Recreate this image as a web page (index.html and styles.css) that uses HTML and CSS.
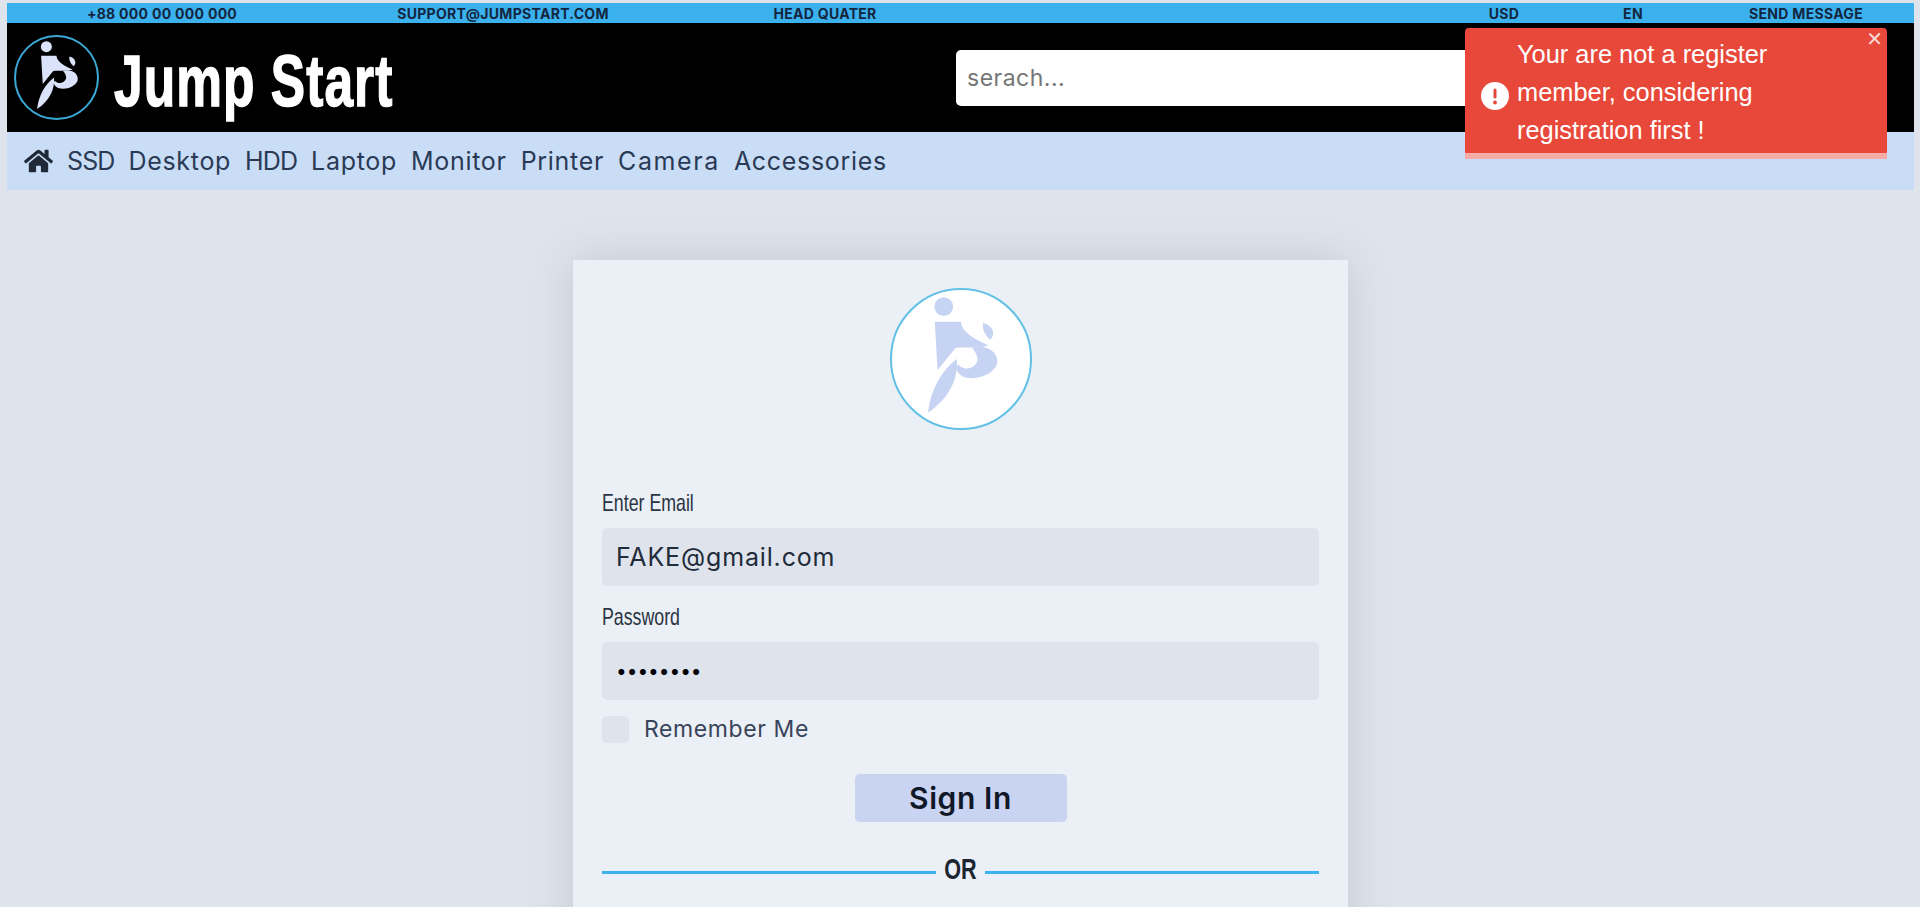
FILE: index.html
```html
<!DOCTYPE html>
<html lang="en">
<head>
<meta charset="utf-8">
<title>Jump Start</title>
<link rel="stylesheet" href="styles.css">
</head>
<body>
<svg class="defs" width="0" height="0" aria-hidden="true">
  <symbol id="js-logo" viewBox="0 0 100 100">
    <circle cx="37.500" cy="12" r="6.800"/>
    <path d="M31 23H50C50 30 60 36 70 40C62 43 52 41 46 42L33 58Z"/>
    <path d="M66 24C74 26 75 33 71 36C68 33 65 29 66 24Z"/>
    <path class="soft" d="M58 42C70 39 78 46 76 54C73 61 62 66 52 63C46 60 46 56 48 54C52 59 60 57 62 51C62 47 60 44 58 42Z"/>
    <path class="soft" d="M47 50C48 64 42 78 26 89C28 72 36 58 47 50Z"/>
  </symbol>
</svg>
<header class="site-header">
  <div class="topbar">
    <span>+88 000 00 000 000</span>
    <span>SUPPORT@JUMPSTART.COM</span>
    <span>HEAD QUATER</span>
    <span class="spacer"></span>
    <span>USD</span>
    <span>EN</span>
    <span>SEND MESSAGE</span>
  </div>
  <div class="brandbar">
    <div class="brand-logo"><svg class="logo-svg"><use href="#js-logo"/></svg></div>
    <div class="brand-name"><span class="narrow brand-text">Jump Start</span></div>
    <input class="search" type="text" placeholder="serach...">
  </div>
  <nav class="navbar">
    <svg class="home" viewBox="0 0 576 512"><path d="M280.400 148.300 96 300.100V464a16 16 0 0 0 16 16l112-.3a16 16 0 0 0 16-16V368a16 16 0 0 1 16-16h64a16 16 0 0 1 16 16v95.600a16 16 0 0 0 16 16l112 .4a16 16 0 0 0 16-16V300L295.700 148.300a12.200 12.200 0 0 0-15.300 0zM571.600 251.500 488 182.600V44.100a12 12 0 0 0-12-12h-56a12 12 0 0 0-12 12v72.600L318.500 43a48 48 0 0 0-61 0L4.300 251.500a12 12 0 0 0-1.600 16.900l25.500 31a12 12 0 0 0 16.900 1.600l235.200-193.700a12.200 12.200 0 0 1 15.300 0L530.900 301a12 12 0 0 0 16.900-1.600l25.500-31a12 12 0 0 0-1.700-16.900z"/></svg>
    <a class="tight">SSD</a><a>Desktop</a><a class="tight">HDD</a><a>Laptop</a><a>Monitor</a><a>Printer</a><a class="wide">Camera</a><a>Accessories</a>
  </nav>
</header>

<main class="page">
  <form class="card">
    <div class="card-logo"><svg class="logo-svg"><use href="#js-logo"/></svg></div>
    <label class="field-label"><span class="narrow">Enter Email</span></label>
    <input class="field" type="text" value="FAKE@gmail.com">
    <label class="field-label label-pass"><span class="narrow">Password</span></label>
    <input class="field field-pass" type="password" value="12345678">
    <div class="remember"><span class="check"></span><span>Remember Me</span></div>
    <button class="signin" type="button">Sign In</button>
    <div class="or"><span class="line"></span><span class="or-text"><span class="narrow or-narrow">OR</span></span><span class="line"></span></div>
  </form>
</main>

<div class="toast">
  <svg class="toast-icon" viewBox="0 0 28 28"><circle cx="14" cy="14" r="14" fill="#fff"/><rect x="12.500" y="6.500" width="3" height="10" rx="1.500" fill="#e8483a"/><circle cx="14" cy="20.500" r="1.900" fill="#e8483a"/></svg>
  <p class="toast-text">Your are not a register member, considering registration first !</p>
  <span class="toast-close">✕</span>
</div>
</body>
</html>
```

FILE: styles.css
```css
* { box-sizing: border-box; }
html { overflow: hidden; height: 100%; }
body {
  margin: 0;
  padding: 3px 6px 0 7px;
  height: 100%;
  overflow: hidden;
  background: #dfe4ec;
  font-family: "Inter", "Noto Sans", sans-serif;
  color: #212b3a;
}
.defs { position: absolute; }

/* condensed look for the display face */
.narrow {
  display: inline-block;
  transform: scaleX(.74);
  transform-origin: left center;
  white-space: nowrap;
}

.topbar {
  display: grid;
  grid-template-columns: 310px 372px 272px 479px 128px 130px 216px;
  justify-items: center;
  align-items: center;
  height: 20px;
  background: #3bb1ee;
  font-size: 14px;
  letter-spacing: .3px;
  font-weight: 700;
  color: #13263f;
  white-space: nowrap;
}

.brandbar {
  display: flex;
  align-items: center;
  height: 109px;
  background: #000;
  padding-left: 7px;
}
.brand-logo {
  width: 85px;
  height: 85px;
  flex: none;
  border: 2px solid #3ba9d6;
  border-radius: 50%;
}
.logo-svg { display: block; width: 100%; height: 100%; fill: currentColor; }
.brand-logo .logo-svg { fill: #dbe3fa; }
.brand-name {
  width: 282px;
  flex: none;
  margin-left: 15px;
  padding-top: 5px;
  font-family: "Liberation Sans", sans-serif;
  font-size: 73px;
  font-weight: 700;
  line-height: 1;
  color: #fff;
}
.brand-text {
  transform: scaleX(.705);
  letter-spacing: 1.500px;
  -webkit-text-stroke: 1.500px #fff;
}
.search {
  margin-left: 560px;
  width: 700px;
  height: 56px;
  border: 0;
  border-radius: 5px;
  background: #fff;
  padding: 0 11px;
  font-family: "Inter", sans-serif;
  font-size: 23px;
  letter-spacing: .5px;
}
.search::placeholder { color: #757575; opacity: 1; }

.navbar {
  display: flex;
  align-items: center;
  gap: 14px;
  height: 58px;
  background: #c9ddf6;
  padding-left: 17px;
  font-size: 25px;
  letter-spacing: .7px;
  color: #2a3a55;
}
.navbar a { white-space: nowrap; }
.navbar .tight { letter-spacing: -.9px; }
.navbar .wide { letter-spacing: 1.6px; }
.home { width: 29px; height: 26px; fill: #1f2937; }

.page { display: flex; justify-content: center; padding-top: 70px; }
.card {
  width: 775px;
  height: 760px;
  background: #eaf0f6;
  padding: 28px 29px 0;
  box-shadow: 0 0 40px rgba(90, 105, 125, .22);
}
.card-logo {
  width: 142px;
  height: 142px;
  margin: 0 auto 60px;
  background: #fff;
  border: 2px solid #62c0e6;
  border-radius: 50%;
  color: #c6d3f3;
}
.card-logo .soft { fill: #d9e5f1; }
.field-label {
  display: block;
  font-family: "Liberation Sans", sans-serif;
  font-size: 24px;
  line-height: 26px;
  color: #2b3442;
}
.field {
  display: block;
  width: 100%;
  height: 58px;
  margin-top: 12px;
  border: 0;
  border-radius: 5px;
  background: #dfe4ec;
  padding: 0 14px;
  font-family: "Inter", sans-serif;
  font-size: 25px;
  letter-spacing: .85px;
  color: #212b3a;
}
.field-pass { font-size: 19px; letter-spacing: 0; color: #000; }
.label-pass { margin-top: 18px; }
.remember {
  display: flex;
  align-items: center;
  gap: 15px;
  margin-top: 15px;
  font-size: 23px;
  letter-spacing: .6px;
  color: #39435a;
}
.check {
  width: 27px;
  height: 27px;
  border-radius: 5px;
  background: #dde4ec;
}
.signin {
  display: block;
  width: 212px;
  height: 48px;
  margin: 31px auto 0;
  border: 0;
  border-radius: 5px;
  background: #c9d4f2;
  font-family: "Inter", sans-serif;
  font-size: 30px;
  letter-spacing: .6px;
  font-weight: 600;
  color: #111827;
}
.or {
  display: flex;
  align-items: center;
  gap: 2px;
  margin-top: 37px;
}
.line { flex: 1; height: 3px; background: #3bb1ee; }
.or-text {
  margin-top: -6px;
  font-family: "Liberation Sans", sans-serif;
  font-size: 30px;
  font-weight: 700;
  line-height: 32px;
  color: #1c2430;
}
.or-narrow { transform: scaleX(.72); transform-origin: center; }

.toast {
  position: absolute;
  top: 28px;
  left: 1465px;
  width: 422px;
  height: 131px;
  display: flex;
  align-items: center;
  gap: 8px;
  padding: 2px 20px 0 16px;
  background: #e8483a;
  border-bottom: 6px solid #f5aca6;
  border-radius: 4px 4px 0 0;
}
.toast-icon { width: 28px; height: 28px; flex: none; margin-top: 8px; }
.toast-text {
  margin: 0;
  width: 320px;
  font-family: "Liberation Sans", Arial, sans-serif;
  font-size: 25.400px;
  line-height: 38px;
  color: #fff;
}
.toast-close {
  position: absolute;
  top: 0;
  right: 4px;
  font-family: "DejaVu Sans", sans-serif;
  font-size: 20px;
  line-height: 22px;
  color: #f8d8d4;
}
```
